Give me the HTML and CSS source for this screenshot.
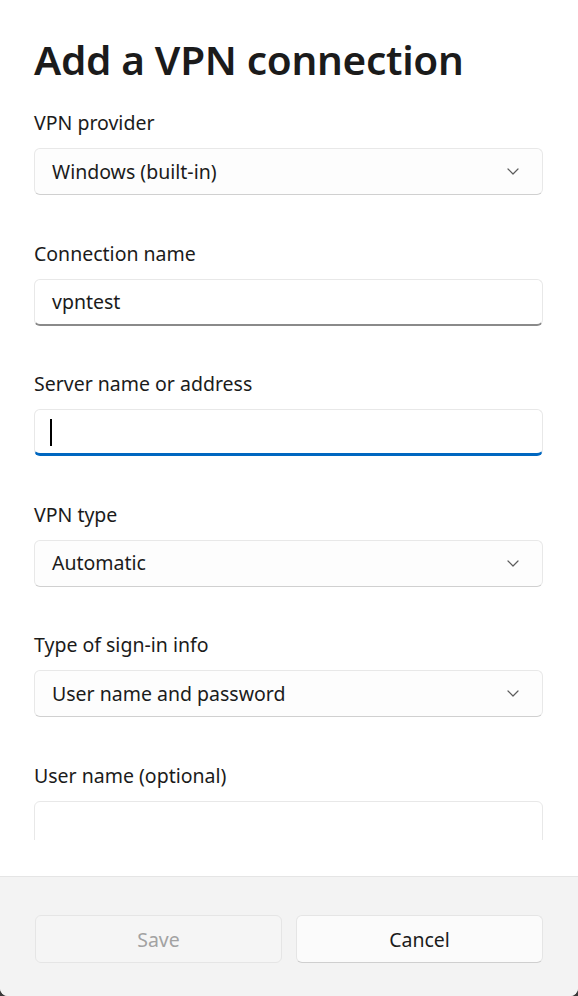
FILE: index.html
```html
<!DOCTYPE html>
<html lang="en">
<head>
<meta charset="utf-8">
<title>Add a VPN connection</title>
<link rel="stylesheet" href="styles.css">
</head>
<body>
<div class="dialog">
  <div class="content">
    <h1 class="title">Add a VPN connection</h1>
    <div class="fields">
      <div class="field">
        <div class="label">VPN provider</div>
        <div class="box combo"><span class="value">Windows (built-in)</span>
          <svg class="chev" width="12" height="7" viewBox="0 0 12 7"><path d="M1 1l5 5 5-5" fill="none" stroke="#5c5c5c" stroke-width="1.2" stroke-linecap="round" stroke-linejoin="round"/></svg>
        </div>
      </div>
      <div class="field">
        <div class="label">Connection name</div>
        <div class="box input filled"><span class="value">vpntest</span></div>
      </div>
      <div class="field">
        <div class="label">Server name or address</div>
        <div class="box input focused"><span class="caret"></span></div>
      </div>
      <div class="field">
        <div class="label">VPN type</div>
        <div class="box combo"><span class="value">Automatic</span>
          <svg class="chev" width="12" height="7" viewBox="0 0 12 7"><path d="M1 1l5 5 5-5" fill="none" stroke="#5c5c5c" stroke-width="1.2" stroke-linecap="round" stroke-linejoin="round"/></svg>
        </div>
      </div>
      <div class="field">
        <div class="label">Type of sign-in info</div>
        <div class="box combo"><span class="value">User name and password</span>
          <svg class="chev" width="12" height="7" viewBox="0 0 12 7"><path d="M1 1l5 5 5-5" fill="none" stroke="#5c5c5c" stroke-width="1.2" stroke-linecap="round" stroke-linejoin="round"/></svg>
        </div>
      </div>
      <div class="field">
        <div class="label">User name (optional)</div>
        <div class="box input"></div>
      </div>
    </div>
  </div>
  <div class="footer">
    <button class="btn disabled">Save</button>
    <button class="btn">Cancel</button>
  </div>
</div>
</body>
</html>
```
FILE: styles.css
```css
html, body {
  margin: 0;
  padding: 0;
  background: #3a3a3a;
}
body {
  font-family: "Noto Sans", "Open Sans", sans-serif;
  color: #1b1b1b;
}
.dialog {
  width: 578px;
  height: 996px;
  background: #ffffff;
  border-radius: 0 0 8px 8px;
  overflow: hidden;
  display: flex;
  flex-direction: column;
}
.content {
  height: 840px;
  overflow: hidden;
  padding: 0 35px 0 34px;
  margin-bottom: 36px;
  flex: none;
}
.title {
  margin: 32px 0 0;
  font-size: 40.5px;
  line-height: 56px;
  font-weight: 600;
  letter-spacing: -0.3px;
  color: #1b1b1b;
}
.fields {
  margin-top: 21px;
  display: flex;
  flex-direction: column;
  gap: 44.5px;
}
.field {
  display: flex;
  flex-direction: column;
}
.label {
  font-size: 19.5px;
  line-height: 28px;
  margin-bottom: 11px;
}
.box {
  height: 47px;
  box-sizing: border-box;
  border: 1px solid #e8e8e8;
  border-radius: 6px;
  background: #ffffff;
  display: flex;
  align-items: center;
  padding: 0 0 0 17px;
  font-size: 19.5px;
  position: relative;
}
.combo {
  border-bottom-color: #d0d0d0;
  justify-content: space-between;
  padding-right: 23px;
  background: #fdfdfd;
}
.input.filled {
  border-bottom: 2px solid #8a8a8a;
}
.input.focused {
  border-bottom: 3px solid #0067c0;
  padding-top: 2px;
}
.caret {
  width: 2px;
  height: 27px;
  background: #000;
  margin-left: -2px;
}
.value {
  line-height: 28px;
}
.chev {
  display: block;
}
.footer {
  flex: 1;
  background: #f3f3f3;
  border-top: 1px solid #e5e5e5;
  display: flex;
  gap: 14px;
  padding: 38px 35px 0 35px;
}
.btn {
  flex: 1;
  height: 48px;
  box-sizing: border-box;
  border: 1px solid #e5e5e5;
  border-bottom-color: #cfcfcf;
  border-radius: 6px;
  background: #fbfbfb;
  font-family: "Noto Sans", "Open Sans", sans-serif;
  font-size: 19.5px;
  color: #1b1b1b;
  padding: 0;
}
.btn.disabled {
  background: #f5f5f5;
  border-color: #e5e5e5;
  color: #a2a2a2;
}
```
